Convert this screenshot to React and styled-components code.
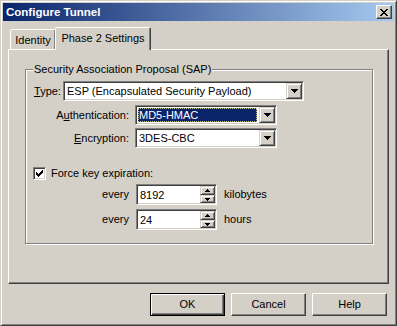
import React from "react";
import styled, { createGlobalStyle } from "styled-components";

const Global = createGlobalStyle`
  html, body { margin: 0; padding: 0; background: #d4d0c8; }
  * { box-sizing: border-box; }
  body { font-family: "Liberation Sans", Arial, sans-serif; font-size: 11px; color: #000; }
`;

const Window = styled.div`
  width: 397px;
  height: 326px;
  display: flex;
  flex-direction: column;
  background: #d4d0c8;
  border: 1px solid;
  border-color: #d4d0c8 #404040 #404040 #d4d0c8;
  box-shadow: inset 1px 1px 0 #fff, inset -1px -1px 0 #808080;
  padding: 2px;
`;

const TitleBar = styled.div`
  height: 18px;
  display: flex;
  align-items: center;
  justify-content: space-between;
  padding: 0 2px 0 3px;
  background: linear-gradient(to right, #0a246a, #a6caf0);
  color: #fff;
  font-family: "Liberation Sans", Arial, sans-serif;
  font-weight: bold;
  font-size: 11.5px;
  line-height: 18px;
`;

const CloseButton = styled.div`
  width: 16px;
  height: 14px;
  display: flex;
  align-items: center;
  justify-content: center;
  background: #d4d0c8;
  border: 1px solid;
  border-color: #fff #404040 #404040 #fff;
  box-shadow: inset -1px -1px 0 #808080;
`;

const Body = styled.div`
  flex: 1;
  display: flex;
  flex-direction: column;
  padding: 6px 5px 7px 5px;
`;

const TabRow = styled.div`
  height: 23px;
  margin-bottom: -1px;
  display: flex;
  align-items: flex-start;
  padding-left: 2px;
  position: relative;
  z-index: 1;
`;

const Tab = styled.div`
  width: ${(p) => p.$w}px;
  height: ${(p) => (p.$active ? 23 : 20)}px;
  margin-top: ${(p) => (p.$active ? 0 : 2)}px;
  margin-left: ${(p) => (p.$active ? -1 : 0)}px;
  background: #d4d0c8;
  border: 1px solid;
  border-bottom: none;
  border-color: #fff #404040 transparent #fff;
  border-radius: 2px 2px 0 0;
  box-shadow: inset -1px 0 0 #808080;
  text-align: center;
  padding-top: ${(p) => (p.$active ? 4 : 4)}px;
  line-height: 13px;
`;

const Panel = styled.div`
  flex: 1;
  background: #d4d0c8;
  border: 1px solid;
  border-color: #fff #404040 #404040 #fff;
  box-shadow: inset -1px -1px 0 #808080;
  padding: 19px 15px 0 16px;
`;

const Group = styled.div`
  display: flex;
  flex-direction: column;
  border: 1px solid #808080;
  box-shadow: 1px 1px 0 #fff, inset 1px 1px 0 #fff;
  padding: 0 8px 13px 8px;
`;

const Legend = styled.span`
  align-self: flex-start;
  margin: -7px 0 0 -1px;
  padding: 0 1px;
  line-height: 13px;
  background: #d4d0c8;
`;

const Row = styled.div`
  display: flex;
  align-items: center;
  gap: ${(p) => p.$gap || 0}px;
  margin-top: ${(p) => p.$top}px;
  margin-left: ${(p) => p.$left || 0}px;
`;

const Label = styled.span`
  width: ${(p) => (p.$w ? `${p.$w}px` : "auto")};
  text-align: ${(p) => (p.$right ? "right" : "left")};
  white-space: nowrap;
  line-height: 13px;
`;

const Sunken = styled.div`
  width: ${(p) => p.$w}px;
  height: ${(p) => p.$h}px;
  display: flex;
  background: #fff;
  border: 1px solid;
  border-color: #808080 #fff #fff #808080;
  box-shadow: inset 1px 1px 0 #404040, inset -1px -1px 0 #d4d0c8;
  padding: 1px;
`;

const FieldText = styled.div`
  flex: 1;
  display: flex;
  align-items: center;
  padding-left: ${(p) => (p.$selected ? 1 : 2)}px;
  margin: ${(p) => (p.$selected ? "1px 2px 1px 1px" : "0")};
  background: ${(p) => (p.$selected ? "#0a246a" : "#fff")};
  color: ${(p) => (p.$selected ? "#fff" : "#000")};
  outline: ${(p) => (p.$selected ? "1px dotted #c8c890" : "none")};
  outline-offset: -1px;
  white-space: nowrap;
  overflow: hidden;
`;

const Raised = styled.div`
  width: ${(p) => p.$w}px;
  height: ${(p) => p.$h}px;
  display: flex;
  align-items: center;
  justify-content: center;
  background: #d4d0c8;
  border: 1px solid;
  border-color: #d4d0c8 #404040 #404040 #d4d0c8;
  box-shadow: inset 1px 1px 0 #fff, inset -1px -1px 0 #808080;
`;

const SpinCol = styled.div`
  display: flex;
  flex-direction: column;
`;

const CheckBox = styled.div`
  width: 13px;
  height: 13px;
  display: flex;
  align-items: center;
  justify-content: center;
  background: #fff;
  border: 1px solid;
  border-color: #808080 #fff #fff #808080;
  box-shadow: inset 1px 1px 0 #404040, inset -1px -1px 0 #d4d0c8;
`;

const ButtonRow = styled.div`
  display: flex;
  justify-content: flex-end;
  gap: 6px;
  margin-top: 9px;
  padding-right: 2px;
`;

const Button = styled.div`
  width: 75px;
  height: 23px;
  display: flex;
  align-items: center;
  justify-content: center;
  background: #d4d0c8;
  border: 1px solid;
  border-color: ${(p) => (p.$default ? "#000" : "#fff #404040 #404040 #fff")};
  box-shadow: ${(p) =>
    p.$default
      ? "inset 1px 1px 0 #fff, inset -1px -1px 0 #404040, inset -2px -2px 0 #808080"
      : "inset -1px -1px 0 #808080"};
  line-height: 13px;
`;

const U = styled.span`
  text-decoration: underline;
  text-underline-offset: 1px;
`;

const DownArrow = ({ small }) =>
  small ? (
    <svg width="5" height="3" shapeRendering="crispEdges">
      <path d="M0 0h5v1h-1v1h-1v1h-1v-1h-1v-1h-1z" fill="#000" />
    </svg>
  ) : (
    <svg width="7" height="4" shapeRendering="crispEdges">
      <path d="M0 0h7v1h-1v1h-1v1h-1v1h-1v-1h-1v-1h-1v-1h-1z" fill="#000" />
    </svg>
  );

const UpArrow = () => (
  <svg width="5" height="3" shapeRendering="crispEdges">
    <path d="M2 0h1v1h1v1h1v1h-5v-1h1v-1h1z" fill="#000" />
  </svg>
);

const Combo = ({ w, selected, children }) => (
  <Sunken $w={w} $h={20}>
    <FieldText $selected={selected}>{children}</FieldText>
    <Raised $w={16} $h={16}>
      <DownArrow />
    </Raised>
  </Sunken>
);

const Spinner = ({ value }) => (
  <Sunken $w={81} $h={21}>
    <FieldText>{value}</FieldText>
    <SpinCol>
      <Raised $w={15} $h={9}>
        <UpArrow />
      </Raised>
      <Raised $w={15} $h={8}>
        <DownArrow small />
      </Raised>
    </SpinCol>
  </Sunken>
);

export default function App() {
  return (
    <>
      <Global />
      <Window>
        <TitleBar>
          <span>Configure Tunnel</span>
          <CloseButton>
            <svg width="8" height="7" shapeRendering="crispEdges">
              <path
                d="M0 0h2v1h1v1h2v-1h1v-1h2v1h-1v1h-1v1h-1v1h1v1h1v1h1v1h-2v-1h-1v-1h-2v1h-1v1h-2v-1h1v-1h1v-1h1v-1h-1v-1h-1v-1h-1z"
                fill="#000"
              />
            </svg>
          </CloseButton>
        </TitleBar>
        <Body>
          <TabRow>
            <Tab $w={46}>Identity</Tab>
            <Tab $w={96} $active>
              Phase 2 Settings
            </Tab>
          </TabRow>
          <Panel>
            <Group>
              <Legend>Security Association Proposal (SAP)</Legend>
              <Row $top={5}>
                <Label $w={29}>
                  <U>T</U>ype:
                </Label>
                <Combo w={241}>ESP (Encapsulated Security Payload)</Combo>
              </Row>
              <Row $top={4} $gap={6}>
                <Label $w={95} $right>
                  A<U>u</U>thentication:
                </Label>
                <Combo w={142} selected>
                  MD5-HMAC
                </Combo>
              </Row>
              <Row $top={3} $gap={6}>
                <Label $w={95} $right>
                  <U>E</U>ncryption:
                </Label>
                <Combo w={142}>3DES-CBC</Combo>
              </Row>
              <Row $top={19} $gap={5} $left={-1}>
                <CheckBox>
                  <svg width="7" height="7" shapeRendering="crispEdges">
                    <path
                      d="M6 0h1v3h-1v1h-1v1h-1v1h-1v1h-1v-1h-1v-1h-1v-3h1v1h1v1h1v-1h1v-1h1v-1h1z"
                      fill="#000"
                    />
                  </svg>
                </CheckBox>
                <Label>Force key expiration:</Label>
              </Row>
              <Row $top={4} $gap={7}>
                <Label $w={95} $right>
                  every
                </Label>
                <Spinner value="8192" />
                <Label>kilobytes</Label>
              </Row>
              <Row $top={4} $gap={7}>
                <Label $w={95} $right>
                  every
                </Label>
                <Spinner value="24" />
                <Label>hours</Label>
              </Row>
            </Group>
          </Panel>
          <ButtonRow>
            <Button $default>OK</Button>
            <Button>Cancel</Button>
            <Button>Help</Button>
          </ButtonRow>
        </Body>
      </Window>
    </>
  );
}
